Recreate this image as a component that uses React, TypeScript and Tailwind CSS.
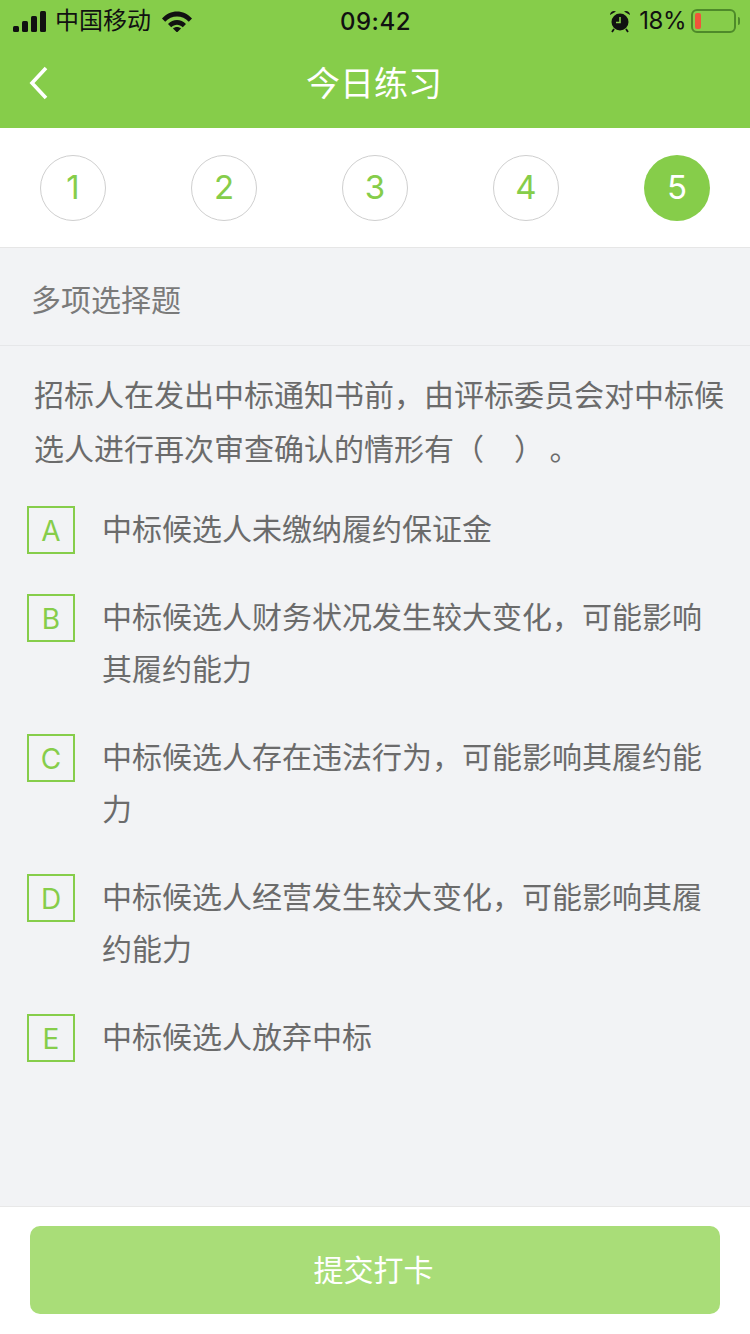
const font = { fontFamily: 'Inter, "Noto Sans CJK SC", sans-serif' };

const options = [
  { key: "A", text: "中标候选人未缴纳履约保证金", mb: "mb-[39px]" },
  { key: "B", text: "中标候选人财务状况发生较大变化，可能影响其履约能力", mb: "mb-[39px]" },
  { key: "C", text: "中标候选人存在违法行为，可能影响其履约能力", mb: "mb-[39px]" },
  { key: "D", text: "中标候选人经营发生较大变化，可能影响其履约能力", mb: "mb-[39px]" },
  { key: "E", text: "中标候选人放弃中标", mb: "" },
];

function StatusBar() {
  return (
    <div className="relative flex h-[40px] items-center justify-between pl-[13px] pr-[10px] pt-[2px] text-[#111]">
      <div className="flex items-center">
        <svg width="34" height="21" viewBox="0 0 34 21" fill="#111">
          <rect x="0" y="15" width="6" height="6" rx="1.5" />
          <rect x="9" y="10" width="6" height="11" rx="1.5" />
          <rect x="18" y="5" width="6" height="16" rx="1.5" />
          <rect x="27" y="0" width="6" height="21" rx="1.5" />
        </svg>
        <span className="ml-[8px] text-[24px] leading-none">中国移动</span>
        <svg className="ml-[11px]" width="30" height="21" viewBox="0 0 30 21" fill="#111">
          <path d="M0 7.500C8-2 22-2 30 7.500L26.800 10.800C20.500 3.800 9.500 3.800 3.200 10.800z" />
          <path d="M6 13C11 7.500 19 7.500 24 13L20.800 16.200C17.500 12.800 12.500 12.800 9.200 16.200z" />
          <path d="M11 17.500C13 15.500 17 15.500 19 17.500L15 21.500z" />
        </svg>
      </div>
      <span className="absolute left-[340px] top-[8px] text-[24px] leading-[28px] font-medium tracking-[0.5px]">09:42</span>
      <div className="flex items-center">
        <svg width="22" height="24" viewBox="0 0 22 24" fill="#111">
          <circle cx="11" cy="13" r="8.500" />
          <path d="M1 6a4 4 0 0 1 6-3.500zM21 6a4 4 0 0 0-6-3.500z" />
          <path d="M11 8v5.500H7" fill="none" stroke="#86cd4a" strokeWidth="1.600" />
          <path d="M5 20l-2 3M17 20l2 3" stroke="#111" strokeWidth="1.800" />
        </svg>
        <span className="ml-[8px] text-[24px] leading-none tracking-[-0.5px]">18%</span>
        <div className="ml-[5px] flex h-[24px] w-[45px] items-center rounded-[6px] border-2 border-[#4e8a2a] pl-[2px]">
          <div className="h-[16px] w-[6px] rounded-[2px] bg-[#f0553a]" />
        </div>
        <div className="ml-[2px] h-[8px] w-[2px] rounded-r bg-[#4e8a2a]" />
      </div>
    </div>
  );
}

export default function App() {
  return (
    <div className="flex h-[1334px] w-[750px] flex-col overflow-hidden bg-[#f2f3f5]" style={font}>
      <header className="h-[128px] bg-[#86cd4a]">
        <StatusBar />
        <div className="relative flex h-[88px] items-center justify-center">
          <svg className="absolute left-[28px] top-[26px]" width="22" height="34" viewBox="0 0 22 34" fill="none" stroke="#fff" strokeWidth="3.600">
            <path d="M18 2L4 17l14 15" />
          </svg>
          <h1 className="pr-[2px] text-[34px] leading-none text-white">今日练习</h1>
        </div>
      </header>

      <nav className="flex h-[120px] items-center justify-between border-b border-[#e6e6e6] bg-white px-[40px]">
        {[1, 2, 3, 4].map((n) => (
          <div key={n} className="flex h-[66px] w-[66px] items-center justify-center rounded-full border border-[#cfcfcf] text-[33px] text-[#86cd4a]">
            {n}
          </div>
        ))}
        <div className="flex h-[66px] w-[66px] items-center justify-center rounded-full bg-[#86cd4a] text-[33px] text-white">5</div>
      </nav>

      <div className="flex h-[98px] items-center border-b border-[#e6e7e9] pl-[31px] pt-[8px] text-[30px] text-[#7a7a7a]">多项选择题</div>

      <p className="pl-[34px] pr-[20px] pt-[22px] text-[30px] leading-[54px] text-[#6b6b6b]">
        招标人在发出中标通知书前，由评标委员会对中标候选人进行再次审查确认的情形有（　）{"\u2009"}。
      </p>

      <ul className="mt-[30px] pl-[27px] pr-[46px]">
        {options.map((o) => (
          <li key={o.key} className={`flex ${o.mb}`}>
            <span className="flex h-[48px] w-[48px] shrink-0 items-center justify-center border-2 border-[#86cd4a] pt-[2px] text-[28px] text-[#86cd4a]">{o.key}</span>
            <span className="ml-[27px] -mt-[3px] text-[30px] leading-[52px] text-[#6b6b6b]">{o.text}</span>
          </li>
        ))}
      </ul>

      <footer className="mt-auto flex h-[128px] border-t border-[#e8e8e8] bg-white px-[30px] pt-[19px]">
        <button className="h-[88px] w-full rounded-[10px] bg-[#a9dd78] pr-[3px] text-[30px] text-white">提交打卡</button>
      </footer>
    </div>
  );
}
